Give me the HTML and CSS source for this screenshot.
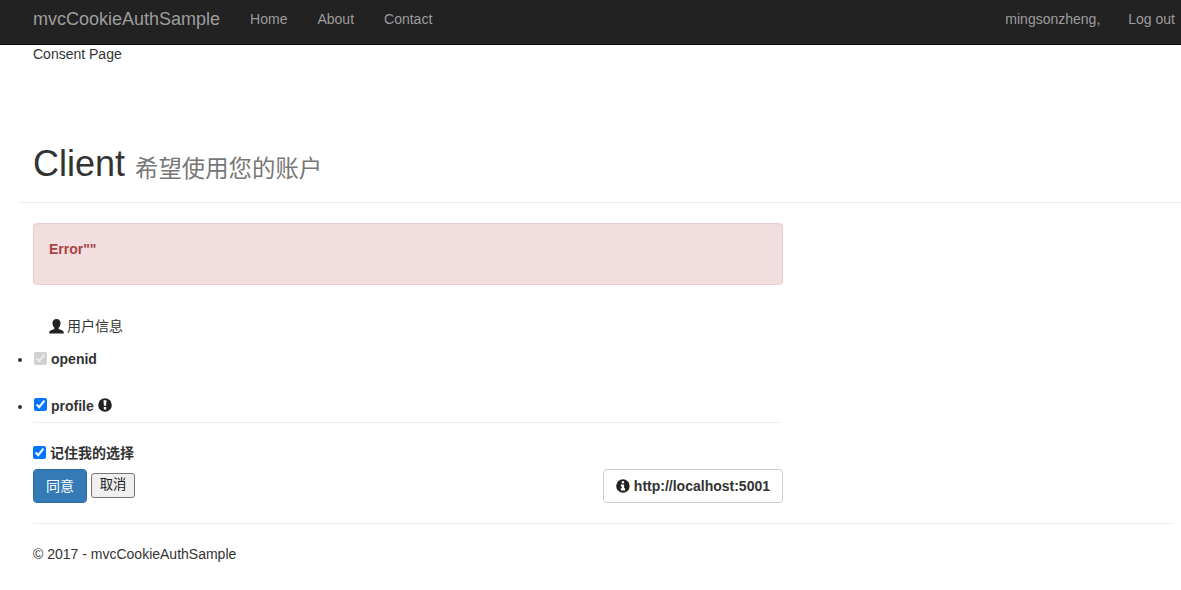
FILE: index.html
```html
<!DOCTYPE html>
<html lang="zh">
<head>
<meta charset="utf-8">
<title>Consent</title>
<link rel="stylesheet" href="styles.css">
</head>
<body>
<nav class="navbar">
  <a class="brand">mvcCookieAuthSample</a>
  <ul class="nav-links">
    <li>Home</li>
    <li>About</li>
    <li>Contact</li>
  </ul>
  <ul class="nav-right">
    <li>mingsonzheng,</li>
    <li>Log out</li>
  </ul>
</nav>
<main class="page">
  <p class="crumb">Consent Page</p>
  <header class="page-header">
    <h1>Client <small>希望使用您的账户</small></h1>
  </header>
  <section class="consent">
    <div class="alert"><strong>Error""</strong></div>
    <div class="panel-title">
      <svg class="icon-user" viewBox="0 0 16 16" width="15" height="15"><path fill="#222" d="M8 0c2.800 0 4.300 1.900 4.300 4.500 0 2-.9 3.800-2 4.800v1.300l4 1.700c1.100.5 1.500 1.200 1.500 3.200H.2c0-2 .4-2.700 1.500-3.200l4-1.700V9.300C4.600 8.300 3.700 6.500 3.700 4.500 3.700 1.900 5.200 0 8 0z"/></svg>
      <span>用户信息</span>
    </div>
    <ul class="scopes">
      <li class="scope"><input type="checkbox" checked disabled><strong>openid</strong></li>
      <li class="scope scope-last"><input class="raised" type="checkbox" checked><strong>profile</strong>
        <svg class="icon-info" viewBox="0 0 14 14" width="14" height="14"><circle cx="7" cy="7" r="6.800" fill="#222"/><path fill="#fff" d="M5.500 2.200h3l-.4 5.600H5.900zM5.800 8.900h2.400v2.600H5.800z"/></svg>
      </li>
    </ul>
    <label class="remember"><input type="checkbox" checked><strong>记住我的选择</strong></label>
    <div class="actions">
      <div class="buttons">
        <button class="btn-primary" type="button">同意</button>
        <button class="btn-plain" type="button">取消</button>
      </div>
      <a class="client-link">
        <svg class="icon-info" viewBox="0 0 14 14" width="14" height="14"><circle cx="7" cy="7" r="6.800" fill="#222"/><path fill="#fff" d="M5.800 2.200h2.400v2.100H5.800zM4.800 5.400h3.400v3.900h1v2.300H4.800V9.300h1V7.500h-1z"/></svg>
        <strong>http://localhost:5001</strong>
      </a>
    </div>
  </section>
  <hr class="rule">
  <footer class="footer">© 2017 - mvcCookieAuthSample</footer>
</main>
</body>
</html>
```
FILE: styles.css
```css
* { box-sizing: border-box; }
html, body { margin: 0; padding: 0; }
body {
  font-family: "Liberation Sans", Arial, "Noto Sans CJK SC", sans-serif;
  font-size: 14px;
  line-height: 20px;
  color: #333;
  background: #fff;
}
.navbar {
  display: flex;
  align-items: center;
  height: 45px;
  padding: 0 6px 6px 33px;
  background: #222;
  border-bottom: 1px solid #080808;
  color: #9d9d9d;
}
.brand { font-size: 18px; margin-right: 15px; }
.nav-links, .nav-right {
  display: flex;
  list-style: none;
  margin: 0;
  padding: 0;
}
.nav-links li { padding: 0 15px; }
.nav-right { margin-left: auto; gap: 28px; }
.page { padding-left: 18px; }
.crumb { margin: 0; padding: 0 0 0 15px; line-height: 20px; position: relative; top: -1px; }
.page-header {
  margin: 60px 0 20px;
  padding: 0 0 9px 15px;
  border-bottom: 1px solid #eee;
  height: 78px;
}
h1 { margin: 0; padding-top: 19px; font-size: 36px; font-weight: 500; line-height: 40px; }
h1 small { font-size: 23.4px; font-weight: 400; color: #777; vertical-align: -1px; }
.consent { width: 765px; padding-left: 15px; }
.alert {
  height: 62px;
  padding: 15px;
  color: #a94442;
  background: #f2dede;
  border: 1px solid #ebccd1;
  border-radius: 4px;
}
.panel-title {
  display: flex;
  align-items: center;
  gap: 3px;
  margin-top: 31px;
  padding-left: 16px;
  height: 20px;
}
.scopes { margin: 0; padding: 0; list-style: disc; }
.scope {
  display: list-item;
  height: 60px;
  padding-top: 13px;
  list-style-position: outside;
}
.scope-last { height: 27px; padding-top: 0; margin-right: 2px; border-bottom: 1px solid #eee; }
.scope input, .remember input { margin: 0 4px 0 1px; vertical-align: -1px; width: 13px; height: 13px; }
.scope input.raised { vertical-align: 0; }
.remember { display: block; margin-top: 20px; height: 25px; }
.remember input { margin: 0 4px 0 0; }
.icon-info { vertical-align: -1px; }
.actions { display: flex; justify-content: space-between; align-items: center; height: 34px; margin-top: 1px; }
.buttons { display: flex; align-items: center; gap: 4px; }
.btn-primary {
  width: 54px;
  height: 34px;
  color: #fff;
  background: #337ab7;
  border: 1px solid #2e6da4;
  border-radius: 4px;
  font: inherit;
}
.btn-plain {
  width: 44px;
  height: 25px;
  margin-bottom: 2px;
  padding: 0;
  color: #222;
  background: #efefef;
  border: 1px solid #767676;
  border-radius: 3px;
  font: inherit;
  font-size: 13.333px;
}
.client-link {
  display: flex;
  align-items: center;
  gap: 4px;
  width: 180px;
  height: 34px;
  padding: 0 12px;
  border: 1px solid #ccc;
  border-radius: 4px;
  white-space: nowrap;
}
.rule { width: 1140px; margin: 20px 0 0 15px; border: 0; border-top: 1px solid #eee; }
.footer { margin: 20px 0 0 15px; }
```
